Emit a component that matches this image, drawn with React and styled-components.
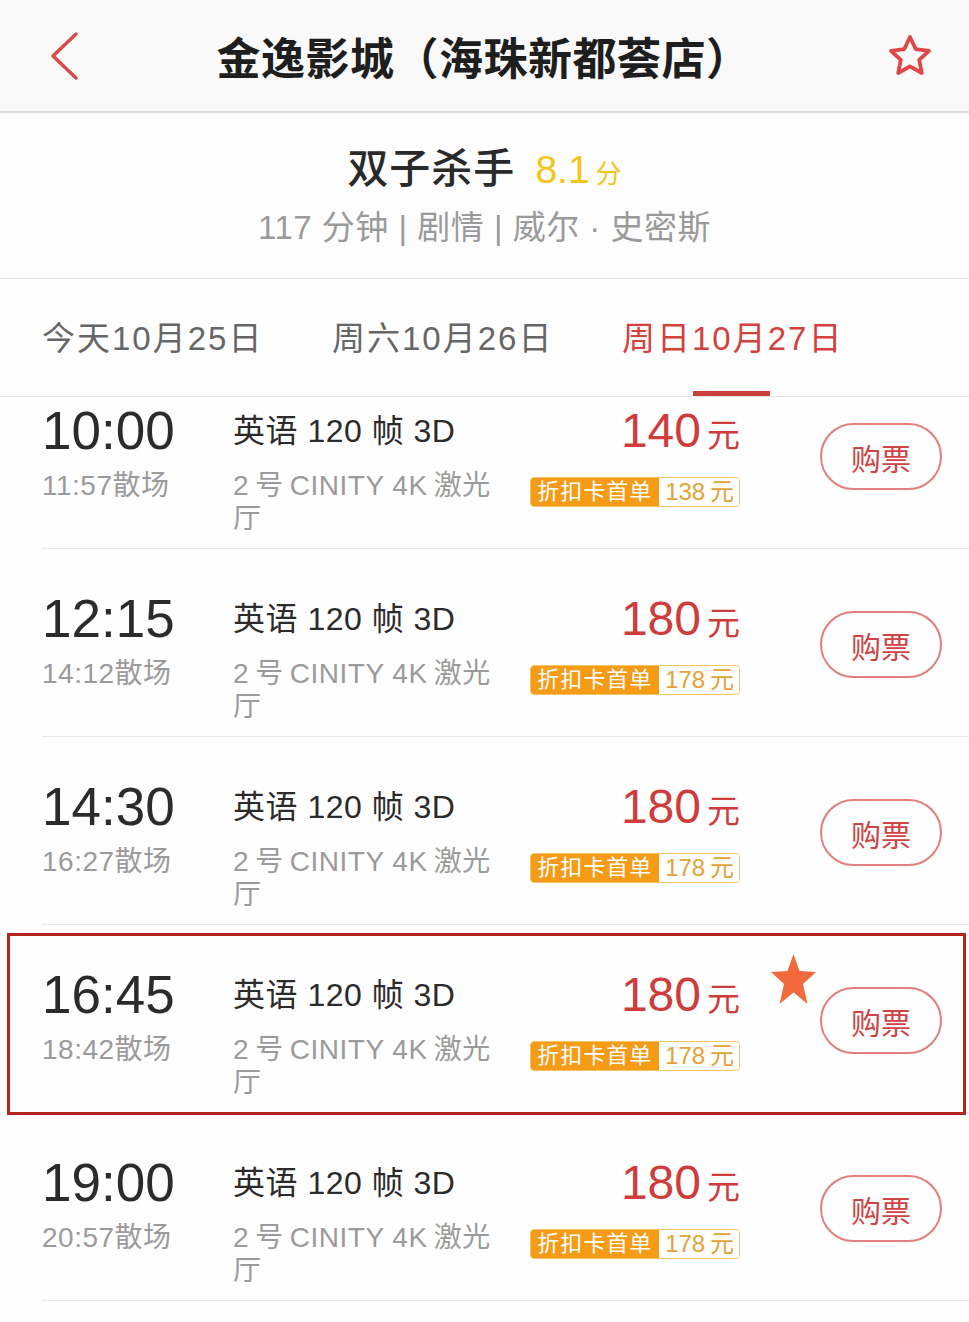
import styled, { createGlobalStyle } from 'styled-components'

const GlobalStyle = createGlobalStyle`
    body {
        margin: 0;
        background: #fefefe;
        font-family: "Liberation Sans", "Noto Sans CJK SC", sans-serif;
    }
`

const Page = styled.div`
    width: 969px;
    height: 1322px;
    overflow: hidden;
    background: #fefefe;
    color: #333;
`

const NavBar = styled.div`
    height: 111px;
    display: flex;
    align-items: center;
    justify-content: space-between;
    padding: 0 34px 0 46px;
    background: #f9f9f9;
    border-bottom: 2px solid #dcdcdc;
`

const NavTitle = styled.div`
    font-size: 44px;
    font-weight: 700;
    color: #1e1e1e;
    letter-spacing: 0.5px;
    margin-left: 2px;
`

const IconBox = styled.div`
    display: flex;
    align-items: center;
`

const MovieInfo = styled.div`
    height: 166px;
    display: flex;
    flex-direction: column;
    align-items: center;
    padding-top: 30px;
    box-sizing: border-box;
    border-bottom: 1px solid #e6e6e6;
    background: #fdfdfd;
`

const MovieTitle = styled.div`
    display: flex;
    align-items: baseline;
    gap: 20px;
    font-size: 41px;
    font-weight: 500;
    color: #2a2a2a;
    line-height: 52px;
    letter-spacing: 1px;
`

const Score = styled.span`
    color: #f3c517;
    font-size: 39px;
    font-weight: 400;
    letter-spacing: 0;

    small {
        font-size: 26px;
        margin-left: 6px;
    }
`

const MovieMeta = styled.div`
    margin-top: 6px;
    font-size: 33px;
    color: #9a9a9a;
    line-height: 44px;
    letter-spacing: 0.5px;
`

const Tabs = styled.div`
    height: 118px;
    display: flex;
    padding-left: 42px;
    border-bottom: 1px solid #e6e6e6;
    box-sizing: border-box;
`

const Tab = styled.div`
    position: relative;
    width: 290px;
    display: flex;
    align-items: center;
    padding-bottom: 4px;
    font-size: 33px;
    letter-spacing: 2px;
    color: ${p => (p.$active ? '#d4403d' : '#666')};

    &::after {
        content: '';
        display: ${p => (p.$active ? 'block' : 'none')};
        position: absolute;
        bottom: 0;
        left: 71px;
        width: 77px;
        height: 5px;
        background: #c9403c;
    }
`

const List = styled.div`
    overflow: hidden;
    height: 923px;
`

const ListInner = styled.div`
    margin-top: -36px;
`

const Row = styled.div`
    position: relative;
    height: 188px;
    margin-left: 42px;
    padding-top: 40px;
    box-sizing: border-box;
    display: flex;
    align-items: flex-start;
    border-bottom: 1px solid #e8e8e8;
`

const TimeCol = styled.div`
    width: 191px;
    flex-shrink: 0;
`

const StartTime = styled.div`
    font-size: 53px;
    line-height: 60px;
    color: #2b2b2b;
`

const SubText = styled.div`
    margin-top: 8px;
    font-size: 28px;
    line-height: 33px;
    color: #9b9b9b;
    letter-spacing: 0.5px;
`

const InfoCol = styled.div`
    width: 264px;
    flex-shrink: 0;
`

const Version = styled.div`
    font-size: 32px;
    line-height: 60px;
    color: #2b2b2b;
    letter-spacing: 0.5px;
`

const PriceCol = styled.div`
    width: 243px;
    flex-shrink: 0;
    display: flex;
    flex-direction: column;
    align-items: flex-end;
`

const Price = styled.div`
    font-size: 48px;
    line-height: 60px;
    color: #cf3c3c;

    small {
        font-size: 33px;
        margin-left: 6px;
    }
`

const Badge = styled.div`
    margin-top: 11px;
    height: 30px;
    display: flex;
    border-radius: 4px;
    overflow: hidden;
    border: 1px solid #f2c46a;
    box-sizing: border-box;
    font-size: 22px;
    line-height: 28px;
`

const BadgeLabel = styled.span`
    background: #f59b16;
    color: #fff;
    padding: 0 7px 0 6px;
    letter-spacing: 1px;
`

const BadgeValue = styled.span`
    background: #fff;
    color: #e3a237;
    padding: 0 5px 0 6px;
    font-size: 24px;
`

const BuyButton = styled.div`
    margin-left: 80px;
    margin-top: 22px;
    width: 122px;
    height: 67px;
    box-sizing: border-box;
    border: 2px solid #e27e7e;
    border-radius: 34px;
    display: flex;
    align-items: center;
    justify-content: center;
    font-size: 30px;
    color: #cf4444;
`

const Frame = styled.div`
    position: absolute;
    top: 8px;
    left: -35px;
    right: 3px;
    bottom: -3px;
    border: 3px solid #b5231e;
    pointer-events: none;
`

const Mark = styled.svg`
    position: absolute;
    top: 29px;
    left: 729px;
    width: 45px;
    height: 50px;
`

const shows = [
    { start: '10:00', end: '11:57', price: 140, card: 138 },
    { start: '12:15', end: '14:12', price: 180, card: 178 },
    { start: '14:30', end: '16:27', price: 180, card: 178 },
    { start: '16:45', end: '18:42', price: 180, card: 178, marked: true },
    { start: '19:00', end: '20:57', price: 180, card: 178 },
]

function ShowRow({ show }) {
    return (
        <Row>
            <TimeCol>
                <StartTime>{show.start}</StartTime>
                <SubText>{show.end}散场</SubText>
            </TimeCol>
            <InfoCol>
                <Version>英语 120 帧 3D</Version>
                <SubText>{'2\u2009号\u2009CINITY 4K\u2009激光厅'}</SubText>
            </InfoCol>
            <PriceCol>
                <Price>{show.price}<small>元</small></Price>
                <Badge>
                    <BadgeLabel>折扣卡首单</BadgeLabel>
                    <BadgeValue>{show.card}{'\u2009'}元</BadgeValue>
                </Badge>
            </PriceCol>
            <BuyButton>购票</BuyButton>
            {show.marked && (
                <>
                    <Frame />
                    <Mark viewBox="0 0 45 50" preserveAspectRatio="none">
                        <polygon
                            points="22.5,0 28.5,17 45,18 32,30 36.5,50 22.5,38.5 8.5,50 13,30 0,18 16.5,17"
                            fill="#f26a3b"
                        />
                    </Mark>
                </>
            )}
        </Row>
    )
}

export default function App() {
    return (
        <Page>
            <GlobalStyle />
            <NavBar>
                <IconBox>
                    <svg width="34" height="50" viewBox="0 0 34 50">
                        <polyline points="30,3 7,25 30,47" fill="none" stroke="#d94a4a" strokeWidth="3.5" strokeLinecap="round" strokeLinejoin="round" />
                    </svg>
                </IconBox>
                <NavTitle>金逸影城（海珠新都荟店）</NavTitle>
                <IconBox>
                    <svg width="50" height="48" viewBox="0 0 24 24">
                        <polygon
                            points="12,2.5 14.9,8.6 21.5,9.4 16.6,13.9 17.9,20.5 12,17.2 6.1,20.5 7.4,13.9 2.5,9.4 9.1,8.6"
                            fill="none"
                            stroke="#e04848"
                            strokeWidth="1.9"
                            strokeLinejoin="round"
                        />
                    </svg>
                </IconBox>
            </NavBar>
            <MovieInfo>
                <MovieTitle>
                    双子杀手
                    <Score>8.1<small>分</small></Score>
                </MovieTitle>
                <MovieMeta>117 分钟 | 剧情 | 威尔 · 史密斯</MovieMeta>
            </MovieInfo>
            <Tabs>
                <Tab>今天10月25日</Tab>
                <Tab>周六10月26日</Tab>
                <Tab $active>周日10月27日</Tab>
            </Tabs>
            <List>
                <ListInner>
                    {shows.map(s => (
                        <ShowRow key={s.start} show={s} />
                    ))}
                </ListInner>
            </List>
        </Page>
    )
}
